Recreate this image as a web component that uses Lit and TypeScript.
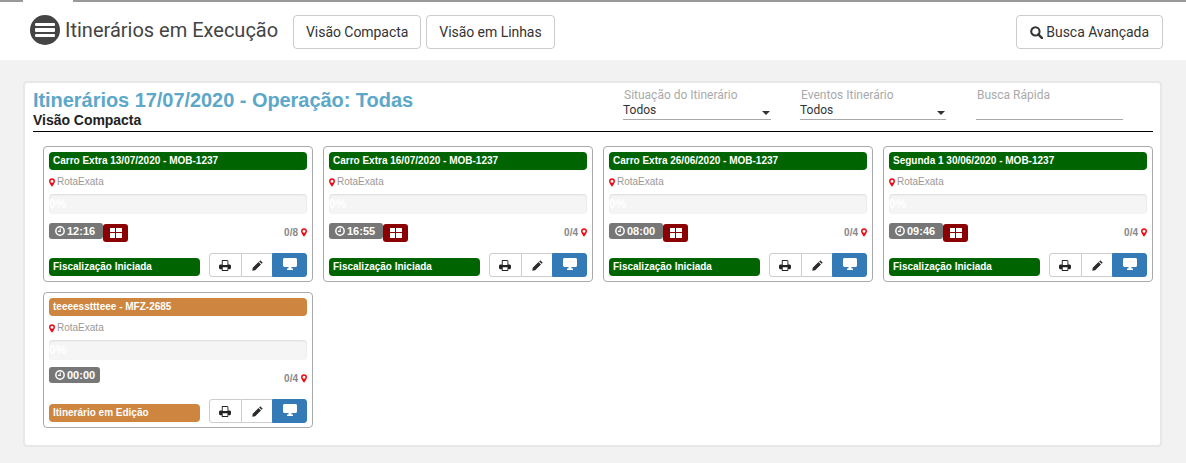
import { LitElement, html, css } from "lit";
import { customElement } from "lit/decorators.js";

const pin = html`<svg class="pin" viewBox="0 0 10 14" width="6" height="9"><path fill-rule="evenodd" fill="#f00a14" d="M5 0a5 5 0 0 1 5 5c0 2.600-3 6.500-5 9C3 11.500 0 7.600 0 5a5 5 0 0 1 5-5zm0 2.500a2.500 2.500 0 1 0 0 5 2.500 2.500 0 0 0 0-5z"/></svg>`;
const clock = html`<svg viewBox="0 0 12 12" width="10" height="10"><circle cx="6" cy="6" r="5" fill="none" stroke="#fff" stroke-width="1.800"/><path d="M6.300 3v3.500H3.500" fill="none" stroke="#fff" stroke-width="1.400"/></svg>`;
const grid = html`<svg viewBox="0 0 12 10" width="12" height="10"><path fill="#fff" d="M0 0h5v4H0zM6 0h6v4H6zM0 5h5v5H0zM6 5h6v5H6z"/></svg>`;
const printer = html`<svg viewBox="0 0 13 12" width="12" height="11"><path fill="#222" fill-rule="evenodd" d="M3 0h6l1.200 1.200V5H12l1 1v3l-1 1h-2v2H3v-2H1L0 9V6l1-1h2zm1 1v4.500h5.200V1zM4 8v3h5.200V8z"/></svg>`;
const pencil = html`<svg viewBox="0 0 12 12" width="11" height="11"><path fill="#2b2b2b" d="M9 0.300 11.700 3 10.500 4.200 7.800 1.500zM7.100 2.200 9.800 4.900 3.500 11.200 0.300 11.700.8 8.500z"/></svg>`;
const monitor = html`<svg viewBox="0 0 14 12" width="14" height="12"><path fill="#fff" d="M1 0h12l1 1v7l-1 1H8.500v1.500H10V12H4v-1.500h1.500V9H1L0 8V1z"/></svg>`;
const search = html`<svg viewBox="0 0 14 14" width="13" height="13"><circle cx="5.800" cy="5.800" r="4.500" fill="none" stroke="#333" stroke-width="2.200"/><path d="M9 9l4 4" stroke="#333" stroke-width="2.600" stroke-linecap="round"/></svg>`;

interface Card { title: string; time: string; count: string; status: string; edit?: boolean; }
const cards: Card[] = [
  { title: "Carro Extra 13/07/2020 - MOB-1237", time: "12:16", count: "0/8", status: "Fiscalização Iniciada" },
  { title: "Carro Extra 16/07/2020 - MOB-1237", time: "16:55", count: "0/4", status: "Fiscalização Iniciada" },
  { title: "Carro Extra 26/06/2020 - MOB-1237", time: "08:00", count: "0/4", status: "Fiscalização Iniciada" },
  { title: "Segunda 1 30/06/2020 - MOB-1237", time: "09:46", count: "0/4", status: "Fiscalização Iniciada" },
  { title: "teeeessttteee - MFZ-2685", time: "00:00", count: "0/4", status: "Itinerário em Edição", edit: true },
];

@customElement("app-root")
export class AppRoot extends LitElement {
  static styles = css`
    :host { display: block; width: 1186px; height: 463px; overflow: hidden; background: #f2f2f2; font-family: Roboto, "Liberation Sans", sans-serif; color: #333; }
    * { box-sizing: border-box; }
    .topline { display: flex; height: 2px; background: #999; padding-left: 23px; }
    .topline i { display: block; width: 50px; background: #fff; }
    header { height: 58px; background: #fff; display: flex; align-items: flex-start; padding: 13px 23px 0 30px; }
    .burger { width: 30px; height: 30px; border-radius: 50%; background: #444; display: flex; flex-direction: column; justify-content: center; gap: 2px; padding: 0 5px; }
    .burger i { display: block; height: 3.500px; background: #fff; border-radius: 1px; }
    h1 { margin: 0 0 0 5px; font: 400 20px/30px Roboto, sans-serif; color: #444; width: 228px; white-space: nowrap; }
    .btn { height: 34px; border: 1px solid #ccc; border-radius: 4px; background: #fff; color: #333; font: 400 14px/32px Roboto, sans-serif; padding: 0 12px; white-space: nowrap; display: flex; align-items: center; letter-spacing: -0.05px; }
    .views { display: flex; gap: 5px; }
    .adv { margin-left: auto; gap: 3px; padding: 0 13px; }
    .adv svg { display: block; }
    .panel { margin: 21px 24px 0 23px; height: 366px; background: #fff; border: 2px solid #e8e8e8; border-radius: 4px; padding: 0 7px 0 8px; }
    .head { height: 49px; border-bottom: 1px solid #000; display: flex; }
    .titles { width: 590px; padding-top: 5px; }
    h2 { margin: 0; font: 700 20px/24px "Liberation Sans", Arial, sans-serif; color: #5da7c9; white-space: nowrap; letter-spacing: -0.05px; }
    h3 { margin: 0; font: 700 14px/16px "Liberation Sans", Arial, sans-serif; color: #222; white-space: nowrap; letter-spacing: -0.03px; }
    .filter { width: 148px; height: 32px; margin-top: 5px; margin-right: 29px; position: relative; border-bottom: 1px solid #aaa; }
    .filter.w2 { margin-right: 30px; width: 146px; }
    .filter label { display: block; font: 400 12px/14px Roboto, sans-serif; color: #aaa; padding-left: 1px; }
    .filter .v { font: 400 12px/14px Roboto, sans-serif; color: #333; margin-top: 1px; }
    .filter b { position: absolute; right: 1px; top: 23px; width: 0; height: 0; border: 4px solid transparent; border-top-color: #333; border-bottom: 0; }
    .filter.search { width: 147px; margin: 5px 0 0; }
    .grid { display: grid; grid-template-columns: repeat(4, 270px); gap: 10px; padding: 14px 0 0 10px; }
    .card { height: 136px; border: 1px solid #aaa; border-radius: 4px; padding: 5px 5px 4px; background: #fff; display: flex; flex-direction: column; }
    .bar { height: 18px; border-radius: 4px; color: #fff; font: 700 10px/18px "Liberation Sans", Arial, sans-serif; padding-left: 4px; white-space: nowrap; }
    .green { background: #006400; }
    .orange { background: #cd853f; }
    .route { margin-top: 4px; height: 16px; display: flex; align-items: center; gap: 2px; font: 400 10px/16px "Liberation Sans", Arial, sans-serif; color: #999; }
    .pin { display: block; flex: none; }
    .progress { margin-top: 4px; height: 20px; background: #f5f5f5; border-radius: 4px; box-shadow: inset 0 1px 2px rgba(0,0,0,.1); color: #fff; font: 700 12px/20px "Liberation Sans", Arial, sans-serif; }
    .timerow { margin-top: 9px; height: 19px; display: flex; align-items: flex-start; }
    .time { width: 54px; height: 16px; border-radius: 3px; background: #777; color: #fff; font: 700 11px/16px "Liberation Sans", Arial, sans-serif; display: flex; align-items: center; gap: 2px; padding-left: 6px; }
    .time.alone { width: 51px; margin-top: -2px; }
    .redbtn { width: 25px; height: 18px; margin-top: 1px; border-radius: 3px; background: #8b0000; display: flex; align-items: center; justify-content: center; }
    .count { margin-left: auto; margin-top: 1px; font: 700 10px/14px "Liberation Sans", Arial, sans-serif; color: #888; display: flex; align-items: center; gap: 3px; }
    .count span { margin-top: 2px; }
    .foot { margin-top: auto; display: flex; justify-content: space-between; align-items: flex-end; }
    .status { width: 151px; height: 18px; border-radius: 4px; color: #fff; font: 700 10px/18px "Liberation Sans", Arial, sans-serif; padding-left: 4px; white-space: nowrap; margin-bottom: 1px; }
    .tools { display: flex; height: 24px; width: 98px; }
    .tools div { display: flex; align-items: center; justify-content: center; border: 1px solid #ccc; background: #fff; }
    .tools div:nth-child(1) { width: 33px; border-radius: 3px 0 0 3px; }
    .tools div:nth-child(2) { width: 31px; border-left: 0; border-right: 0; }
    .tools div:nth-child(3) { width: 35px; background: #337ab7; border-color: #337ab7; border-radius: 0 3px 3px 0; }
    .tools div:nth-child(3) svg { margin-top: -2px; }
  `;

  card(c: Card) {
    const cls = c.edit ? "orange" : "green";
    return html`<div class="card">
      <div class="bar ${cls}">${c.title}</div>
      <div class="route">${pin}<span>RotaExata</span></div>
      <div class="progress">0%</div>
      <div class="timerow">
        <div class="time ${c.edit ? "alone" : ""}">${clock}<span>${c.time}</span></div>
        ${c.edit ? "" : html`<div class="redbtn">${grid}</div>`}
        <div class="count"><span>${c.count}</span>${pin}</div>
      </div>
      <div class="foot">
        <div class="status ${cls}">${c.status}</div>
        <div class="tools"><div>${printer}</div><div>${pencil}</div><div>${monitor}</div></div>
      </div>
    </div>`;
  }

  render() {
    return html`
      <div class="topline"><i></i></div>
      <header>
        <div class="burger"><i></i><i></i><i></i></div>
        <h1>Itinerários em Execução</h1>
        <div class="views">
          <div class="btn">Visão Compacta</div>
          <div class="btn">Visão em Linhas</div>
        </div>
        <div class="btn adv">${search}<span>Busca Avançada</span></div>
      </header>
      <section class="panel">
        <div class="head">
          <div class="titles">
            <h2>Itinerários 17/07/2020 - Operação: Todas</h2>
            <h3>Visão Compacta</h3>
          </div>
          <div class="filter"><label>Situação do Itinerário</label><div class="v">Todos</div><b></b></div>
          <div class="filter w2"><label>Eventos Itinerário</label><div class="v">Todos</div><b></b></div>
          <div class="filter search"><label>Busca Rápida</label></div>
        </div>
        <div class="grid">${cards.map((c) => this.card(c))}</div>
      </section>
    `;
  }
}
